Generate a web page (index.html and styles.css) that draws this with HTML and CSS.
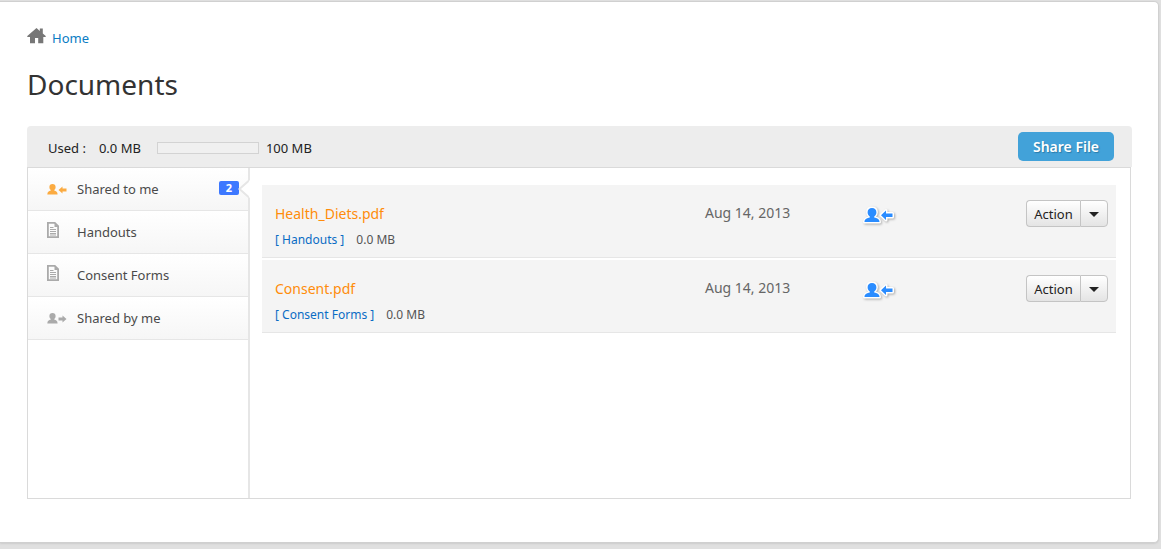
FILE: index.html
```html
<!DOCTYPE html>
<html lang="en">
<head>
<meta charset="utf-8">
<title>Documents</title>
<link rel="stylesheet" href="styles.css">
</head>
<body>
<svg class="defs" width="0" height="0" aria-hidden="true">
  <symbol id="person-in" viewBox="0 0 20 11">
    <path d="M5.500 0C7.500 0 8.600 1.200 8.600 2.900C8.600 4.400 8 5.400 7.200 6V6.600C9.200 7.200 10.600 8 10.600 10.500H0.300C0.300 8 1.800 7.200 3.800 6.600V6C3 5.400 2.400 4.400 2.400 2.900C2.400 1.200 3.500 0 5.500 0Z"/>
    <path d="M11.500 6L15.500 2.400V4.500H19.500V7.500H15.500V9.600Z"/>
  </symbol>
  <symbol id="person-out" viewBox="0 0 20 11">
    <path d="M5.500 0C7.500 0 8.600 1.200 8.600 2.900C8.600 4.400 8 5.400 7.200 6V6.600C9.200 7.200 10.600 8 10.600 10.500H0.300C0.300 8 1.800 7.200 3.800 6.600V6C3 5.400 2.400 4.400 2.400 2.900C2.400 1.200 3.500 0 5.500 0Z"/>
    <path d="M19.500 6L15.500 2.400V4.500H11.500V7.500H15.500V9.600Z"/>
  </symbol>
  <symbol id="page" viewBox="0 0 12 16">
    <path fill="none" stroke="currentColor" stroke-width="1.800" d="M0.900 0.900H7.800L11.100 4.200V15.100H0.900Z"/>
    <path d="M7.500 1L11.500 5H7.500Z"/>
    <path fill="none" stroke="currentColor" d="M3 5.500H6.500M3 7.500H9M3 9.500H9M3 11.500H9M3 13H9"/>
  </symbol>
  <symbol id="person-in-large" viewBox="0 0 34 20">
    <g stroke="#fff" stroke-width="3" stroke-linejoin="round" paint-order="stroke">
      <path d="M10 2C12.800 2 14.400 3.800 14.400 6.200C14.400 8.200 13.500 9.600 12.200 10.500V11.400C15 12 17.500 12.800 17.500 16H2.500C2.500 12.800 5 12 7.800 11.400V10.500C6.500 9.600 5.600 8.200 5.600 6.200C5.600 3.800 7.200 2 10 2Z"/>
      <path d="M19 9.200L24 4.500V7.500H30.500V11H24V14Z"/>
    </g>
  </symbol>
</svg>
<main class="card">
  <nav class="crumbs">
    <svg class="house" viewBox="0 0 19 16" aria-hidden="true"><path d="M9.500 0L12.800 2.900V0.500H15.800V5.400L19 8.200L18.300 9H16.300V15.200H11.200V10H8V15.200H3V9H0.700L0 8.200Z"/></svg>
    <a href="#">Home</a>
  </nav>
  <h1>Documents</h1>
  <section class="panel">
    <header class="bar">
      <span>Used :</span>
      <span class="used">0.0 MB</span>
      <span class="meter" role="img" aria-label="Storage used"></span>
      <span>100 MB</span>
      <button class="share" type="button">Share File</button>
    </header>
    <div class="body">
      <nav class="side">
        <a class="item" href="#"><svg class="person orange" aria-hidden="true"><use href="#person-in"/></svg><span>Shared to me</span><span class="badge">2</span><svg class="notch" viewBox="0 0 12 18" aria-hidden="true"><path d="M12 0L10.500 1.500L1.500 9L10.500 16.500L12 18Z" fill="#fff"/><path d="M10.500 1L1.500 9L10.500 17" fill="none" stroke="#e6e6e6" stroke-width="2"/></svg></a>
        <a class="item" href="#"><svg class="page" aria-hidden="true"><use href="#page"/></svg><span>Handouts</span></a>
        <a class="item" href="#"><svg class="page" aria-hidden="true"><use href="#page"/></svg><span>Consent Forms</span></a>
        <a class="item" href="#"><svg class="person" aria-hidden="true"><use href="#person-out"/></svg><span>Shared by me</span></a>
      </nav>
      <div class="files">
        <article class="file">
          <div class="info">
            <a class="name" href="#">Health_Diets.pdf</a>
            <div class="meta"><a href="#">[ Handouts ]</a><span>0.0 MB</span></div>
          </div>
          <time class="date" datetime="2013-08-14">Aug 14, 2013</time>
          <div class="status"><svg class="shared" aria-hidden="true"><use href="#person-in-large"/></svg></div>
          <div class="actions"><button type="button">Action</button><button class="more" type="button" aria-label="More actions"><svg viewBox="0 0 10 5" aria-hidden="true"><path d="M0 0H10L5 5Z"/></svg></button></div>
        </article>
        <article class="file">
          <div class="info">
            <a class="name" href="#">Consent.pdf</a>
            <div class="meta"><a href="#">[ Consent Forms ]</a><span>0.0 MB</span></div>
          </div>
          <time class="date" datetime="2013-08-14">Aug 14, 2013</time>
          <div class="status"><svg class="shared" aria-hidden="true"><use href="#person-in-large"/></svg></div>
          <div class="actions"><button type="button">Action</button><button class="more" type="button" aria-label="More actions"><svg viewBox="0 0 10 5" aria-hidden="true"><path d="M0 0H10L5 5Z"/></svg></button></div>
        </article>
      </div>
    </div>
  </section>
</main>
</body>
</html>
```
FILE: styles.css
```css
* { box-sizing: border-box; }
body {
  margin: 0;
  padding: 1px 2px 6px 0;
  background: #e0e0e0;
  color: #222;
  font: 13px/20px "Noto Sans", "Open Sans", sans-serif;
}
a { text-decoration: none; }
svg { display: block; fill: currentColor; }
button { font: inherit; color: inherit; cursor: pointer; }
.defs { position: absolute; }

.card {
  padding: 24px 26px 43px 27px;
  background: #fff;
  border: 1px solid #d0d0d0;
  border-left: 0;
  border-radius: 0 5px 5px 0;
  box-shadow: 0 1px 2px #ccc;
}
.crumbs { display: flex; gap: 6px; padding-top: 2px; }
.crumbs a { color: #0a7cc4; }
.house { width: 19px; height: 16px; color: #777; }
h1 {
  margin: 16px 0 22px;
  color: #333;
  font-size: 28px;
  font-weight: 400;
  line-height: 40px;
}

.bar {
  display: flex;
  align-items: center;
  height: 41px;
  padding: 2px 18px 0 21px;
  background: #ededed;
  border-radius: 4px 4px 0 0;
}
.used { margin-left: 13px; }
.meter {
  width: 102px;
  height: 12px;
  margin: 0 7px 0 16px;
  background: #f0f0f0;
  border: 1px solid #d3d3d3;
}
.share {
  width: 96px;
  height: 29px;
  margin: 0 0 2px auto;
  padding: 0;
  border: 0;
  border-radius: 5px;
  background: #42a2d9;
  color: #fff;
  font-size: 14px;
  font-weight: 600;
  text-shadow: 1px 1px 1px #2a7aa8;
}
.body {
  display: flex;
  min-height: 332px;
  margin-right: 1px;
  border: 1px solid #dadada;
}
.side { width: 222px; flex: none; border-right: 2px solid #e6e6e6; }
.item {
  position: relative;
  display: flex;
  align-items: center;
  height: 43px;
  padding: 0 9px 0 19px;
  border-bottom: 1px solid #e6e6e6;
  background: linear-gradient(#fff, #f6f6f6);
  color: #4a4a4a;
}
.person { width: 20px; height: 11px; margin-right: 10px; color: #aaa; }
.orange { color: #fbab41; }
.page { width: 12px; height: 16px; margin: 0 18px 4px 0; color: #aaa; }
.badge {
  width: 20px;
  height: 14px;
  margin: 0 0 2px auto;
  border-radius: 2px;
  background: #3d78ff;
  color: #fff;
  font-size: 11px;
  font-weight: 700;
  line-height: 14px;
  text-align: center;
}
.notch { position: absolute; top: 12px; right: -2px; width: 12px; height: 18px; }

.files {
  display: flex;
  flex: 1;
  flex-direction: column;
  gap: 2px;
  padding: 17px 14px 0 12px;
}
.file {
  display: grid;
  grid-template-columns: 430fr 157fr 164fr auto;
  padding: 15px 8px 5px 13px;
  border-bottom: 1px solid #e6e6e6;
  background: #f4f4f4;
}
.name { display: block; color: #ff8c0a; font-size: 14px; line-height: 28px; }
.meta { display: flex; gap: 12px; color: #555; font-size: 12px; line-height: 24px; }
.meta a { color: #0a6cc4; }
.date { color: #666; font-size: 14px; line-height: 26px; }
.shared { width: 34px; height: 20px; margin-top: 6px; color: #2a8cff; filter: drop-shadow(1px 1px 1px #aaa); }
.actions { display: flex; height: 27px; }
.actions button {
  width: 54px;
  padding: 0;
  border: 1px solid #c4c4c4;
  border-right: 0;
  border-radius: 4px 0 0 4px;
  background: linear-gradient(#fff, #e4e4e4);
}
.actions .more {
  display: grid;
  place-items: center;
  width: 28px;
  border-right: 1px solid #c4c4c4;
  border-radius: 0 4px 4px 0;
}
.more svg { width: 10px; height: 5px; margin-top: 2px; }
```
